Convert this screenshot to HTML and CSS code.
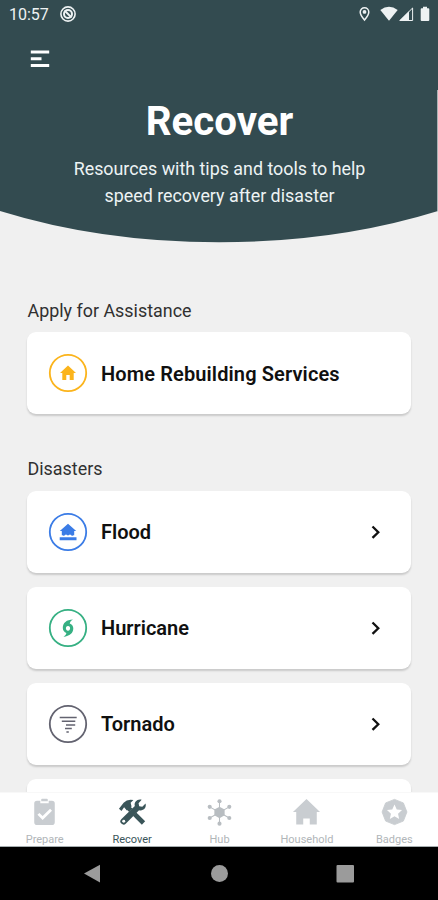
FILE: index.html
```html
<!DOCTYPE html>
<html lang="en">
<head>
<meta charset="utf-8">
<title>Recover</title>
<link rel="stylesheet" href="styles.css">
</head>
<body>
<div class="phone">
  <header class="hero">
    <svg class="hero-curve" viewBox="0 0 438 243" aria-hidden="true">
      <path d="M0 0H438V211Q337 242.300 219 242.300Q101 242.300 0 211Z"/>
    </svg>
    <div class="hero-content">
      <div class="status">
        <span class="clock">10:57</span>
        <svg class="sync" width="16" height="16" viewBox="0 0 16 16"><circle cx="8" cy="8" r="7.100" fill="none" stroke="currentColor" stroke-width="1.600"/><circle cx="8" cy="8" r="4" fill="none" stroke="currentColor" stroke-width="2"/><path d="M4.500 4.500l7 7" stroke="currentColor" stroke-width="2"/></svg>
        <svg class="tray" width="72" height="16" viewBox="0 0 72 16">
          <path d="M5.500 1.700a4.300 4.300 0 0 0-4.300 4.300c0 3 4.300 8 4.300 8s4.300-5 4.300-8a4.300 4.300 0 0 0-4.300-4.300z" fill="none" stroke="currentColor" stroke-width="1.500"/><circle cx="5.500" cy="5.900" r="1.900" fill="currentColor"/>
          <path d="M21.300 4Q30 -2.300 38.700 4L30 14.800Z" fill="currentColor"/>
          <path d="M53.600 2V14.500H41Z" fill="none" stroke="currentColor" stroke-width="1"/><path d="M40 15L50 5.300V15Z" fill="currentColor"/><path d="M51.700 6v7" stroke="#334b50" stroke-width="1.300"/>
          <path d="M64 .8h4v1.500h1.300a1 1 0 0 1 1 1V14a1 1 0 0 1-1 1h-6.600a1 1 0 0 1-1-1V3.300a1 1 0 0 1 1-1H64z" fill="currentColor"/>
        </svg>
      </div>
      <svg class="menu" width="20" height="18" viewBox="0 0 20 18"><path d="M.8 1.900H19.200M.8 8.800H11.500M.8 15.600H19.200" stroke="currentColor" stroke-width="3"/></svg>
      <h1>Recover</h1>
      <p>Resources with tips and tools to help<br>speed recovery after disaster</p>
    </div>
    <span class="scrollbar"></span>
  </header>

  <main>
    <section class="assist">
      <h2>Apply for Assistance</h2>
      <div class="card">
        <svg class="badge gold" viewBox="0 0 40 40"><circle cx="20" cy="20" r="18.200"/><path d="M20 12.500l8 7.400h-2.300v7.100h-4v-5h-3.400v5h-4v-7.100H12z"/></svg>
        <span class="name wide">Home Rebuilding Services</span>
      </div>
    </section>
    <section class="disasters">
      <h2>Disasters</h2>
      <div class="card">
        <svg class="badge blue" viewBox="0 0 40 40"><circle cx="20" cy="20" r="18.200"/><path d="M20 11.700l8.200 7.300h-2v4.300c-1 0-1.400.5-2.200.5s-1.200-1.200-2-1.200-1.200 1-2 1-1.200-1-2-1-1.200 1.200-2 1.200-1.200-.5-2.200-.5V19h-2zM11.700 25.300h16.800v3H11.700z"/></svg>
        <span class="name">Flood</span>
        <svg class="chevron" viewBox="0 0 10 14"><path d="M1.500 1.500L7.300 7.200 1.500 12.900"/></svg>
      </div>
      <div class="card">
        <svg class="badge green" viewBox="0 0 40 40"><circle cx="20" cy="20" r="18.200"/><path fill-rule="evenodd" d="M25 11.500C18.500 11.500 14.800 15 14.800 20C14.800 22.300 16.300 24.400 18.400 24.900C18 26.500 17 27.800 15.400 28.700C21.800 28.400 25.300 25 25.300 20.300C25.300 17.800 23.800 16 21.700 15.400C22.100 13.700 23.400 12.300 25 11.500ZM20 17.900a2.100 2.400 0 1 0 .01 0z"/></svg>
        <span class="name">Hurricane</span>
        <svg class="chevron" viewBox="0 0 10 14"><path d="M1.500 1.500L7.300 7.200 1.500 12.900"/></svg>
      </div>
      <div class="card">
        <svg class="badge slate" viewBox="0 0 40 40"><circle cx="20" cy="20" r="18.200"/><path d="M11.700 12.800h17v1.500h-17zM13.800 16.500h13.500V18H13.800zM18 20.200h9.200v1.500H18zM17 23.700h6.800v1.500H17zM18.400 27.200h2.400v1.500h-2.400z"/></svg>
        <span class="name">Tornado</span>
        <svg class="chevron" viewBox="0 0 10 14"><path d="M1.500 1.500L7.300 7.200 1.500 12.900"/></svg>
      </div>
      <div class="card"></div>
    </section>
  </main>

  <nav class="tabs">
    <div class="tab">
      <svg viewBox="0 0 30 30"><path d="M7 3h3.500v2.500h9V3H23a3 3 0 0 1 3 3v20a3 3 0 0 1-3 3H7a3 3 0 0 1-3-3V6a3 3 0 0 1 3-3z"/><path d="M11.500 3.500V1.800Q11.500.8 12.500.8h5q1 0 1 1v1.700z"/><path d="M8.500 17l4.500 4.500 9-9" fill="none" stroke="#fff" stroke-width="3"/></svg>
      <span>Prepare</span>
    </div>
    <div class="tab active">
      <svg viewBox="0 0 30 30">
        <path d="M9.500 9.500L26.800 26.800" fill="none" stroke="currentColor" stroke-width="5"/>
        <path d="M.5 11.500L5.500 5Q9.500 .8 16 2.200L13 5.200l1 3.800-5 4.500-3-3.500-2.800 4z"/>
        <path d="M18.500 12L7 23.500" fill="none" stroke="#fff" stroke-width="5.600"/>
        <path d="M24.800 1.800L21.500 5.500l.7 3.300 3.300.6L29 6c1.200 4.700-2.500 8.300-7 7.200L8 27.200a3.400 3.400 0 1 1-4.800-4.800L17.500 8.700C16.300 4.400 20 .7 24.800 1.800z"/>
        <circle cx="5.600" cy="24.800" r="1.600" fill="#fff"/>
      </svg>
      <span>Recover</span>
    </div>
    <div class="tab hub">
      <svg viewBox="0 0 30 30"><path d="M15 4v23M4.500 9.500l21 12M4.500 21.500l21-12" fill="none" stroke="currentColor" stroke-width="1.100"/><path d="M15 9.300l5.500 3.100v6.200L15 21.700l-5.500-3.100v-6.200z"/><circle cx="15" cy="3.500" r="2.200"/><circle cx="15" cy="27.500" r="2.200"/><circle cx="4.500" cy="9.500" r="2.200"/><circle cx="25.500" cy="9.500" r="2.200"/><circle cx="4.500" cy="21.500" r="2.200"/><circle cx="25.500" cy="21.500" r="2.200"/></svg>
      <span>Hub</span>
    </div>
    <div class="tab">
      <svg viewBox="0 0 30 30"><path d="M15 1l14.500 14H26v13.500h-7.500V22h-7v6.500H4V15H.5z"/></svg>
      <span>Household</span>
    </div>
    <div class="tab">
      <svg viewBox="0 0 30 30"><path d="M15 1.500l9.500 3.800L28.300 15l-3.800 9.700L15 28.500l-9.500-3.800L1.700 15l3.800-9.700z" stroke="currentColor" stroke-linejoin="round"/><path d="M15 7l2.400 5.300 5.700.6-4.300 3.900 1.200 5.700-5-2.900-5 2.900 1.200-5.700-4.300-3.900 5.700-.6z" fill="#fff"/></svg>
      <span>Badges</span>
    </div>
  </nav>

  <footer class="system">
    <svg viewBox="0 0 438 53"><path d="M84 26.500L100 17.800V35.500Z"/><circle cx="219.500" cy="26.500" r="8.500"/><rect x="336.500" y="18" width="17.500" height="17.500" rx="1"/></svg>
  </footer>
</div>
</body>
</html>
```
FILE: styles.css
```css
* { box-sizing: border-box; }
body { margin: 0; font-family: Roboto, "Liberation Sans", sans-serif; overflow: hidden; }
svg { display: block; }
.phone { width: 438px; height: 900px; display: flex; flex-direction: column; background: #f0f0f0; overflow: hidden; }

.hero { position: relative; height: 243px; flex: none; color: #fff; }
.hero-curve { position: absolute; inset: 0; width: 438px; height: 243px; fill: #334b50; }
.hero-content { position: relative; }
.scrollbar { position: absolute; right: 0; top: 90px; width: 1px; height: 121px; background: #aab3b5; }
.status { display: flex; align-items: center; height: 28px; padding: 0 7px 0 9px; color: #eef2f3; }
.clock { padding-top: 1px; font-size: 16px; line-height: 28px; width: 39px; white-space: nowrap; }
.sync { margin-left: 12px; }
.tray { margin-left: auto; }
.menu { margin: 22px 0 0 30px; }
h1 { margin: 30px 0 0; padding-left: 1px; text-align: center; font-size: 40.300px; line-height: 48px; font-weight: 700; }
.hero p { margin: 9px 0 0; padding-left: 1px; text-align: center; font-size: 17.850px; line-height: 27px; color: #edf3f4; }

main { flex: 1; min-height: 0; overflow: hidden; padding: 57px 27px 0; }
h2 { margin: 0 0 11px; padding-left: .5px; font-size: 17.900px; line-height: 21px; font-weight: 400; color: #303030; }
.disasters { margin-top: 45px; }
.disasters h2 { margin: -1px 0 12px; }
.card { display: flex; align-items: center; height: 82px; margin-bottom: 14px; padding: 0 30px 0 21.400px; background: #fff; border-radius: 9px; box-shadow: 0 2px 2px rgba(0, 0, 0, .16); }
.disasters .card { padding-bottom: 1px; }
.badge { width: 40px; height: 40px; fill: currentColor; }
.badge circle { fill: none; stroke: currentColor; stroke-width: 1.800; }
.gold { color: #fbb41c; }
.blue { color: #3b7ce6; }
.green { color: #36b083; }
.slate { color: #636370; }
.name { margin-left: 12.600px; padding-top: 1px; font-size: 20px; font-weight: 600; color: #101010; white-space: nowrap; }
.wide { letter-spacing: .12px; }
.chevron { width: 10px; height: 14px; margin-left: auto; fill: none; stroke: #111; stroke-width: 2.300; }

.tabs { display: flex; flex: none; height: 55px; padding-left: 1px; background: #fff; border-top: 1px solid #f8f8f8; border-bottom: 1px solid #a5adaf; }
.tab { flex: 1; display: flex; flex-direction: column; align-items: center; color: #c9cdd1; }
.tab svg { width: 29px; height: 29px; margin-top: 5px; fill: currentColor; }
.tab span { margin-top: 7px; font-size: 11px; line-height: 13px; color: #b1b6b9; }
.tab.active, .tab.active span { color: #3a5559; }
.tab.hub { color: #b8bdc1; }
.system { flex: none; height: 53px; background: #000; }
.system svg { width: 438px; height: 53px; fill: #9b9b9b; }
```
